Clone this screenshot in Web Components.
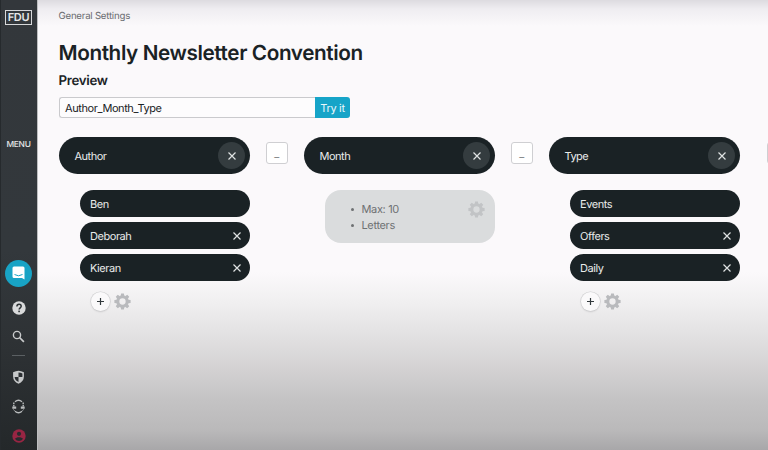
<!DOCTYPE html>
<html lang="en">
<head>
<meta charset="utf-8">
<title>Monthly Newsletter Convention</title>
<style>
html,body{margin:0;height:100%;overflow:hidden}
body{font-family:Inter,"Liberation Sans",sans-serif;color:#1a2225;text-rendering:geometricPrecision}
</style>
</head>
<body>
<naming-app></naming-app>
<script>
function define(name, html) {
  const t = document.createElement('template');
  t.innerHTML = html;
  customElements.define(name, class extends HTMLElement {
    constructor() {
      super();
      this.attachShadow({mode: 'open'}).append(t.content.cloneNode(true));
    }
  });
}

define('cross-icon', `<style>:host{display:block;width:10px;height:10px}svg{display:block}</style>
<svg width="10" height="10" viewBox="0 0 10 10" fill="none" stroke="#dfe2e2" stroke-width="1.200"><path d="M1.500 1.500l7 7M8.500 1.500l-7 7"/></svg>`);

define('gear-icon', `<style>:host{display:block;width:17px;height:17px;color:#b9babd}svg{display:block}</style>
<svg width="17" height="17" viewBox="-8.500 -8.500 17 17"><circle r="4.700" fill="none" stroke="currentColor" stroke-width="3.100"/>
<g fill="currentColor"><path d="M-1.800-5.500L-1.400-8.100H1.400L1.800-5.500ZM-1.800 5.500L-1.400 8.100H1.400L1.800 5.500Z"/>
<path transform="rotate(45)" d="M-1.800-5.500L-1.400-8.100H1.400L1.800-5.500ZM-1.800 5.500L-1.400 8.100H1.400L1.800 5.500Z"/>
<path transform="rotate(90)" d="M-1.800-5.500L-1.400-8.100H1.400L1.800-5.500ZM-1.800 5.500L-1.400 8.100H1.400L1.800 5.500Z"/>
<path transform="rotate(135)" d="M-1.800-5.500L-1.400-8.100H1.400L1.800-5.500ZM-1.800 5.500L-1.400 8.100H1.400L1.800 5.500Z"/></g></svg>`);

define('field-head', `<style>:host{display:flex;box-sizing:border-box;width:191.500px;height:37.500px;border-radius:19px;background:#1a2225;color:#e9ebeb;align-items:center;justify-content:space-between;padding:0 5px 0 16px;font-size:11px;letter-spacing:-.5px;line-height:14px}
div{width:27px;height:27px;border-radius:50%;background:#343c3f;display:flex;align-items:center;justify-content:center}</style>
<slot></slot><div><cross-icon></cross-icon></div>`);

define('option-pill', `<style>:host{display:flex;box-sizing:border-box;width:170.500px;height:27px;margin-bottom:4.900px;border-radius:14px;background:#1a2225;color:#e9ebeb;align-items:center;justify-content:space-between;padding:0 8.500px 0 10.500px;font-size:11px;letter-spacing:-.45px;line-height:14px}
:host([fixed]) cross-icon{display:none}</style>
<slot></slot><cross-icon></cross-icon>`);

define('option-tools', `<style>:host{display:flex;align-items:center;gap:4px;padding:5.500px 0 0 11px}
div{width:19px;height:19px;border-radius:50%;background:#faf9fa;box-shadow:0 0 0 .6px #cfcfd1,0 1px 2px #0002;display:flex;align-items:center;justify-content:center}svg{display:block}gear-icon{margin-top:1px}</style>
<div><svg width="7" height="7" viewBox="0 0 7 7" stroke="#333a3d" stroke-width="1.200"><path d="M0 3.500h7M3.500 0v7"/></svg></div><gear-icon></gear-icon>`);

define('rule-card', `<style>:host{display:flex;box-sizing:border-box;width:170.500px;height:53px;border-radius:16px;background:#dadcdd;color:#6e7173;justify-content:space-between;padding:10.500px 10px 0 23px;font-size:11px;letter-spacing:-.35px}
ul{margin:0;padding:0 0 0 14px;line-height:16px}</style>
<ul><slot></slot></ul><gear-icon style="color:#c2c4c6"></gear-icon>`);
define('rule-item', `<style>:host{display:flex;align-items:center}:host::before{content:"";width:3.500px;height:3.500px;border-radius:50%;background:currentColor;margin:1px 7.500px 0 -11px}</style><slot></slot>`);

define('field-column', `<style>:host{display:flex;flex-direction:column;flex:none;align-items:flex-end;width:191.500px}
section{margin-top:16px;width:170.500px}</style>
<field-head><slot name="title"></slot></field-head><section><slot></slot></section>`);

define('join-box', `<style>:host{display:flex;flex:none;box-sizing:border-box;width:22px;height:22px;margin:5px 15.750px 0;border:1px solid #cfcfd2;border-radius:3px;background:#fff;color:#85888a;align-items:center;justify-content:center;font-size:11px;line-height:12px}
:host(:last-child){margin-left:26.500px}</style><slot></slot>`);

define('preview-bar', `<style>:host{display:flex;box-sizing:border-box;width:291.500px;height:21px;font-size:11px;letter-spacing:-.42px;line-height:21.500px}
div{flex:1;box-sizing:border-box;border:1px solid #cacacd;border-right:0;border-radius:3px 0 0 3px;background:#fdfcfd;padding-left:5.500px}
b{width:35px;background:#16a4c8;color:#e9f7fb;border-radius:0 3px 3px 0;text-align:center;font-weight:400;font-size:11px;letter-spacing:-.3px;line-height:23px}</style>
<div><slot></slot></div><b>Try it</b>`);

define('side-bar', `<style>:host{display:flex;box-sizing:border-box;flex:none;width:37px;height:450px;flex-direction:column;align-items:center;background:linear-gradient(#33373b 0,#33383c 250px,#2e3235 340px,#24282a 450px);box-shadow:inset 1px 0 #262a2d;padding-top:10px;color:#e6e7e8}
.logo{box-sizing:border-box;width:27px;height:15px;border:1.500px solid #d7d8da;font-size:11px;line-height:13px;font-weight:600;text-align:center;letter-spacing:-.3px}
.menu{font-size:8.400px;line-height:12px;margin-top:113.500px;font-weight:500;letter-spacing:-.25px}
.chat{width:27px;height:27px;border-radius:50%;background:#18a3c5;margin-top:109px;display:flex;align-items:center;justify-content:center}
svg{display:block}.a{margin-top:14.500px}.b{margin-top:15px}hr{width:13px;height:1px;border:0;background:#5b6063;margin:11.500px 0 0}</style>
<div class="logo">FDU</div><div class="menu">MENU</div>
<div class="chat"><svg width="13" height="14" viewBox="0 0 13 14"><path d="M2 .5h9a1.500 1.500 0 0 1 1.500 1.500v11.500L10 12H2a1.500 1.500 0 0 1-1.500-1.500V2A1.500 1.500 0 0 1 2 .5z" fill="#fff"/><path d="M2.500 8.500q4 2.600 8 0" fill="none" stroke="#18a3c5" stroke-width="1"/></svg></div>
<svg class="a" width="14" height="14" viewBox="0 0 14 14"><circle cx="7" cy="7" r="6.700" fill="#d9dadb"/><path d="M4.900 5.500C4.900 2.400 9.200 2.500 9.200 5.200 9.200 6.800 7.100 6.900 7.100 8.600" fill="none" stroke="#2d3235" stroke-width="1.500"/><rect x="6.300" y="9.600" width="1.600" height="1.600" fill="#2d3235"/></svg>
<svg class="b" width="13" height="13" viewBox="0 0 13 13" fill="none" stroke="#c9cbcc"><circle cx="5" cy="5" r="3.600" stroke-width="1.400"/><path d="M7.500 7.500l4.400 4.400" stroke-width="1.700"/></svg>
<hr>
<svg style="margin-top:14px" width="13" height="15" viewBox="0 0 13 15"><path d="M6.500 .8Q9 1.200 11.900 2.300V6.500Q11.900 11.500 6.500 13.800Q1.100 11.500 1.100 6.500V2.300Q4 1.200 6.500 .8z" fill="#c6c8c9"/><path d="M6.500 2.500V7H10.400V3.400Q8.500 2.700 6.500 2.500zM6.500 7V12Q2.800 10.300 2.600 7z" fill="#2b2f32"/></svg>
<svg style="margin-top:14px" width="13" height="15" viewBox="0 0 13 15" fill="none" stroke="#b9bcbd" stroke-width="1.400"><path d="M3 2.700Q6.500-.2 10 2.700M3 12.300Q6.500 15.200 10 12.300"/><path d="M1.800 3.500V7.500M11.200 3.500V7.500" stroke-dasharray="1.700 .8"/><path d="M.3 8.700H4.200M8.800 8.700H12.700" stroke-width="2.300"/><path d="M1.500 10.500l1 1.200M11.500 10.500l-1 1.200" stroke-width="1"/></svg>
<svg style="margin-top:15px" width="14" height="14" viewBox="0 0 14 14"><circle cx="7" cy="7" r="6.700" fill="#982543"/><circle cx="7" cy="4.800" r="2.100" fill="#282a2e"/><path d="M2.900 9.800C4.300 7.600 9.700 7.600 11.100 9.800Q9.500 12 7 12T2.900 9.800z" fill="#282a2e"/></svg>`);

define('naming-app', `<style>:host{display:flex;width:768px;height:450px;overflow:hidden}
main{flex:1;min-width:0;box-sizing:border-box;overflow:hidden;padding-left:21.500px;display:flex;flex-direction:column;align-items:flex-start;
background:linear-gradient(#dddbe0 0,#efedf1 9px,#fbf9fb 26px,#fbf9fb 272px,#f1f0f1 300px,#e1e0e1 338px,#d3d1d2 370px,#c4c3c4 400px,#bab9ba 430px,#a8a7a9 450px);box-shadow:inset 1px 0 #bdbec0}
nav{font-size:9.700px;letter-spacing:-.25px;line-height:12px;margin-top:10.600px;color:#6a6c70}
h1{font-size:20.700px;letter-spacing:-.39px;line-height:26px;margin:17.400px 0 0;font-weight:600;white-space:nowrap}
h2{font-size:13.300px;letter-spacing:-.3px;line-height:18px;margin:5.600px 0 0;font-weight:600}
preview-bar{margin-top:7.600px}
.fields{display:flex;align-items:flex-start;margin-top:18.700px}</style>
<side-bar></side-bar>
<main><nav>General Settings</nav><h1>Monthly Newsletter Convention</h1><h2>Preview</h2>
<preview-bar>Author_Month_Type</preview-bar>
<div class="fields">
<field-column><span slot="title">Author</span><option-pill fixed>Ben</option-pill><option-pill>Deborah</option-pill><option-pill>Kieran</option-pill><option-tools></option-tools></field-column>
<join-box>_</join-box>
<field-column><span slot="title">Month</span><rule-card><rule-item>Max: 10</rule-item><rule-item>Letters</rule-item></rule-card></field-column>
<join-box>_</join-box>
<field-column><span slot="title">Type</span><option-pill fixed>Events</option-pill><option-pill>Offers</option-pill><option-pill>Daily</option-pill><option-tools></option-tools></field-column>
<join-box></join-box>
</div></main>`);
</script>
</body>
</html>
